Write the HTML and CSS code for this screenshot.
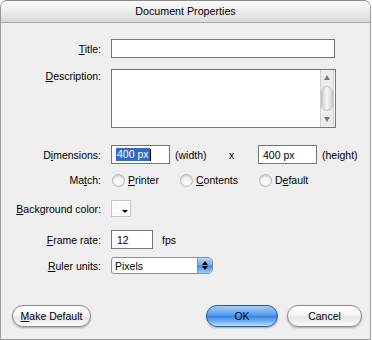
FILE: index.html
```html
<!DOCTYPE html>
<html lang="en">
<head>
    <meta charset="UTF-8">
    <title>Document Properties</title>
    <link rel="stylesheet" href="styles.css">
</head>
<body>
    <div class="window">
        <div class="titlebar">Document Properties</div>

        <div class="content">
            <div class="row row-title">
                <span class="label"><u>T</u>itle:</span>
                <div class="field field-title"></div>
            </div>

            <div class="row row-desc">
                <span class="label"><u>D</u>escription:</span>
                <div class="field field-desc">
                    <div class="scrollbar">
                        <div class="sb-btn"><span class="arrow-up"></span></div>
                        <div class="sb-thumb"></div>
                        <div class="sb-btn"><span class="arrow-down"></span></div>
                    </div>
                </div>
            </div>

            <div class="row row-dim">
                <span class="label">D<u>i</u>mensions:</span>
                <div class="field field-dim"><span class="sel">400 px</span><span class="caret"></span></div>
                <span class="unit unit-width">(width)</span>
                <span class="times">x</span>
                <div class="field field-dim">400 px</div>
                <span class="unit">(height)</span>
            </div>

            <div class="row row-match">
                <span class="label">Ma<u>t</u>ch:</span>
                <div class="radio-item radio-printer"><span class="radio"></span><span><u>P</u>rinter</span></div>
                <div class="radio-item radio-contents"><span class="radio"></span><span><u>C</u>ontents</span></div>
                <div class="radio-item"><span class="radio"></span><span>D<u>e</u>fault</span></div>
            </div>

            <div class="row row-bg">
                <span class="label"><u>B</u>ackground color:</span>
                <div class="swatch"><span class="swatch-arrow"></span></div>
            </div>

            <div class="row row-fps">
                <span class="label"><u>F</u>rame rate:</span>
                <div class="field field-fps">12</div>
                <span class="unit unit-fps">fps</span>
            </div>

            <div class="row row-ruler">
                <span class="label"><u>R</u>uler units:</span>
                <div class="select">
                    <span class="select-text">Pixels</span>
                    <span class="stepper">
                        <span class="arrow-up dark"></span>
                        <span class="arrow-down dark"></span>
                    </span>
                </div>
            </div>
        </div>

        <div class="actions">
            <button class="btn btn-default"><u>M</u>ake Default</button>
            <button class="btn btn-ok">OK</button>
            <button class="btn btn-cancel">Cancel</button>
        </div>
    </div>
</body>
</html>
```

FILE: styles.css
```css
* {
    box-sizing: border-box;
}

body {
    margin: 0;
    background: #fff;
    font-family: "Liberation Sans", Arial, sans-serif;
    font-size: 10.5px;
    color: #000;
}

.window {
    width: 371px;
    height: 340px;
    background: #efefef;
    border: 1px solid #9a9a9a;
    border-top-color: #8c8c8c;
    border-radius: 7px 7px 0 0;
    overflow: hidden;
    display: flex;
    flex-direction: column;
}

.titlebar {
    height: 22px;
    flex-shrink: 0;
    background: linear-gradient(#fbfbfb, #ececec 50%, #d9d9d9);
    border-bottom: 1px solid #a8a8a8;
    text-align: center;
    line-height: 21px;
    font-size: 10.7px;
}

.content {
    display: flex;
    flex-direction: column;
}

.row {
    display: flex;
    align-items: center;
}

.label {
    width: 100px;
    margin-right: 10px;
    text-align: right;
    flex-shrink: 0;
}

.row-title {
    margin-top: 16px;
    height: 19px;
}

.row-desc {
    margin-top: 11px;
    height: 59px;
    align-items: flex-start;
}

.row-desc .label {
    padding-top: 1px;
    line-height: 13px;
}

.row-dim {
    margin-top: 17px;
    height: 19px;
}

.row-match {
    margin-top: 9px;
    height: 14px;
}

.row-bg {
    margin-top: 13px;
    height: 17px;
}

.row-fps {
    margin-top: 13px;
    height: 19px;
}

.row-ruler {
    margin-top: 8px;
    height: 17px;
}

.field {
    height: 100%;
    background: #fff;
    border: 1px solid #767676;
    display: flex;
    align-items: center;
    padding-left: 5px;
}

.field-title {
    width: 224px;
}

.field-desc {
    width: 225px;
    justify-content: flex-end;
    align-items: stretch;
    padding: 0 1px 0 0;
}

.scrollbar {
    width: 14px;
    background: #ececec;
    border-left: 1px solid #d0d0d0;
    border-right: 1px solid #d0d0d0;
    display: flex;
    flex-direction: column;
    align-items: center;
}

.sb-btn {
    height: 15px;
    display: flex;
    align-items: center;
    justify-content: center;
}

.sb-thumb {
    flex: 1;
    width: 12px;
    margin: 1px 0;
    border-radius: 6px;
    border: 1px solid #c4c4c4;
    background: linear-gradient(90deg, #cfcfcf, #f7f7f7 50%, #d2d2d2);
}

.arrow-up {
    width: 0;
    height: 0;
    border-left: 3px solid transparent;
    border-right: 3px solid transparent;
    border-bottom: 5px solid #7a7a7a;
}

.arrow-down {
    width: 0;
    height: 0;
    border-left: 3px solid transparent;
    border-right: 3px solid transparent;
    border-top: 5px solid #7a7a7a;
}

.arrow-up.dark {
    border-bottom-color: #000;
    border-bottom-width: 4px;
}

.arrow-down.dark {
    border-top-color: #000;
    border-top-width: 4px;
}

.field-dim {
    width: 59px;
    padding-left: 4px;
}

.sel {
    background: #316ac5;
    color: #fff;
    padding: 1px;
    line-height: 11px;
}

.caret {
    width: 1px;
    height: 12px;
    background: #000;
}

.unit {
    margin-left: 5px;
}

.unit-width {
    width: 54px;
}

.times {
    width: 29px;
}

.unit-fps {
    margin-left: 9px;
}

.radio-item {
    display: flex;
    align-items: center;
    gap: 3px;
    margin-left: 1px;
}

.radio-printer {
    width: 67px;
}

.radio-contents {
    width: 78px;
}

.radio {
    width: 13px;
    height: 13px;
    border-radius: 50%;
    border: 1px solid #b8b8b8;
    background: radial-gradient(circle at 50% 70%, #ffffff, #e2e2e2);
    box-shadow: inset 0 1px 1px rgba(0, 0, 0, 0.12);
}

.swatch {
    width: 20px;
    height: 17px;
    border: 1px solid #c6c6c6;
    background: #fafafa;
    box-shadow: inset 0 0 0 1px #fff;
    display: flex;
    justify-content: flex-end;
    align-items: flex-end;
    padding: 0 2px 3px 0;
}

.swatch-arrow {
    width: 0;
    height: 0;
    border-left: 3px solid transparent;
    border-right: 3px solid transparent;
    border-top: 3px solid #000;
}

.field-fps {
    width: 42px;
}

.select {
    width: 102px;
    height: 100%;
    background: #fff;
    border: 1px solid #8e8e8e;
    border-radius: 3px 5px 5px 3px;
    display: flex;
    align-items: center;
    overflow: hidden;
}

.select-text {
    padding-left: 3px;
}

.stepper {
    margin-left: auto;
    width: 15px;
    height: 100%;
    border-left: 1px solid #6c93c9;
    background: linear-gradient(#b7d8f9, #71acee 45%, #4a90e6 55%, #9fd0fa);
    display: flex;
    flex-direction: column;
    align-items: center;
    justify-content: center;
    gap: 1px;
}

.actions {
    display: flex;
    margin-top: 31px;
    padding: 0 8px 0 11px;
}

.btn {
    height: 22px;
    border-radius: 11px;
    border: 1px solid #8a8a8a;
    background: linear-gradient(#ffffff, #f6f6f6 45%, #e6e6e6 55%, #fafafa);
    box-shadow: 0 1px 2px rgba(0, 0, 0, 0.3);
    font-family: inherit;
    font-size: 10.5px;
    color: #000;
    padding: 0;
}

.btn-default {
    width: 79px;
}

.btn-ok {
    width: 72px;
    margin-left: auto;
    border-color: #2f5a9c;
    background: linear-gradient(#a6cdf6, #5a9be9 45%, #3a83e2 52%, #79b8f4 80%, #c0e4fd);
}

.btn-cancel {
    width: 75px;
    margin-left: 9px;
}
```
